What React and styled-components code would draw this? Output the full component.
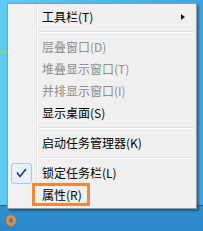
import styled, { createGlobalStyle } from "styled-components";

const GlobalStyle = createGlobalStyle`
  html, body {
    margin: 0;
    padding: 0;
  }
  body {
    font-family: "Noto Sans CJK SC", "Noto Sans", sans-serif;
  }
`;

const menuItems = [
  { label: "工具栏(T)", submenu: true },
  { separator: true },
  { label: "层叠窗口(D)", disabled: true },
  { label: "堆叠显示窗口(T)", disabled: true },
  { label: "并排显示窗口(I)", disabled: true },
  { label: "显示桌面(S)" },
  { separator: true },
  { label: "启动任务管理器(K)" },
  { separator: true },
  { label: "锁定任务栏(L)", checked: true },
  { label: "属性(R)", highlight: true },
];

export default function App() {
  return (
    <>
      <GlobalStyle />
      <Screen>
        <Wallpaper />
        <Taskbar>
          <StartRing />
        </Taskbar>

        <Menu>
          {menuItems.map((item, index) =>
            item.separator ? (
              <Separator key={index} />
            ) : (
              <Item key={index} $disabled={item.disabled}>
                <IconSlot>
                  {item.checked && (
                    <CheckBox>
                      <svg width="11" height="10" viewBox="0 0 11 10">
                        <path
                          d="M1 4.5 L4 8.5 L10 1"
                          fill="none"
                          stroke="#1d3a9e"
                          strokeWidth="1.6"
                        />
                      </svg>
                    </CheckBox>
                  )}
                </IconSlot>
                <Label $highlight={item.highlight}>{item.label}</Label>
                {item.submenu && <Arrow />}
              </Item>
            )
          )}
        </Menu>
      </Screen>
    </>
  );
}

const Screen = styled.div`
  position: relative;
  width: 203px;
  height: 231px;
  display: flex;
  flex-direction: column;
  overflow: hidden;
`;

const Wallpaper = styled.div`
  flex: 1;
  background:
    linear-gradient(to bottom, transparent 51px, #86d37c 51px, #86d37c 53px, transparent 53px) no-repeat 0 0 / 7px 100%,
    linear-gradient(to right, #5ccdf6, #45b6ec 60%, #3aa6e1);
`;

const Taskbar = styled.div`
  height: 26px;
  flex-shrink: 0;
  border-top: 1px solid #1f5f93;
  background: linear-gradient(to bottom, #2f8fd2, #2a86c8);
  display: flex;
  align-items: flex-start;
  padding: 9px 0 0 6px;
  box-sizing: border-box;
`;

const StartRing = styled.div`
  width: 10px;
  height: 11px;
  box-sizing: border-box;
  border: 3px solid #f28a2e;
  border-radius: 50%;
`;

const Menu = styled.div`
  position: absolute;
  left: 7px;
  top: 3px;
  width: 190px;
  height: 206px;
  box-sizing: border-box;
  border: 1px solid #979797;
  padding: 2px 2px 1px 0;
  display: flex;
  flex-direction: column;
  box-shadow: 2px 2px 2px rgba(0, 0, 0, 0.35);
  background: linear-gradient(
    to right,
    #f1f1f1 0,
    #f1f1f1 28px,
    #e2e3e3 28px,
    #e2e3e3 29px,
    #ffffff 29px,
    #ffffff 30px,
    #f0f0f0 30px
  );
`;

const Item = styled.div`
  height: 22px;
  flex-shrink: 0;
  display: flex;
  align-items: center;
  font-size: 12px;
  color: ${(props) => (props.$disabled ? "#8e8e8e" : "#000")};
`;

const IconSlot = styled.div`
  width: 34px;
  height: 22px;
  padding-left: 3px;
  box-sizing: border-box;
  display: flex;
  align-items: center;
  flex-shrink: 0;
`;

const CheckBox = styled.div`
  width: 21px;
  height: 21px;
  box-sizing: border-box;
  border: 1px solid #a9c7ee;
  border-radius: 3px;
  background: #e9f0fa;
  display: flex;
  align-items: center;
  justify-content: center;
`;

const Label = styled.span`
  position: relative;
  line-height: 16px;
  flex: 1;
  white-space: nowrap;
  ${(props) =>
    props.$highlight &&
    `
    flex: none;
    &::after {
      content: "";
      position: absolute;
      left: -10px;
      right: -8px;
      top: -4px;
      bottom: -3px;
      border: 3px solid #f08a3a;
    }
  `}
`;

const Arrow = styled.span`
  width: 0;
  height: 0;
  margin-right: 9px;
  border-top: 3.5px solid transparent;
  border-bottom: 3.5px solid transparent;
  border-left: 4px solid #1a1a1a;
`;

const Separator = styled.div`
  height: 8px;
  flex-shrink: 0;
  margin-left: 30px;
  box-sizing: border-box;
  padding-top: 3px;
  &::before {
    content: "";
    display: block;
    height: 1px;
    background: #e0e0e0;
    border-bottom: 1px solid #ffffff;
  }
`;
